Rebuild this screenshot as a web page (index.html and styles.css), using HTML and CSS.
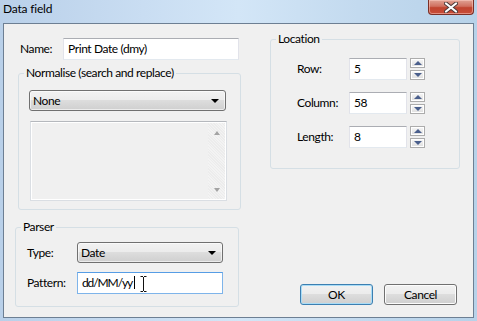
FILE: index.html
```html
<!DOCTYPE html>
<html lang="en">
<head>
    <meta charset="UTF-8">
    <title>Data field</title>
    <link rel="stylesheet" href="styles.css">
</head>
<body>
    <div class="window">
        <div class="titlebar">
            <span class="title">Data field</span>
            <div class="close-btn">
                <svg width="14" height="11" viewBox="0 0 14 11">
                    <path d="M2 1.5 L12 9.5 M12 1.5 L2 9.5" stroke="#4a3838" stroke-width="4" stroke-linecap="round"/>
                    <path d="M2 1.5 L12 9.5 M12 1.5 L2 9.5" stroke="#fff" stroke-width="2.2" stroke-linecap="round"/>
                </svg>
            </div>
        </div>

        <div class="client">
            <div class="col-left">
                <div class="name-row">
                    <span class="label name-label">Name:</span>
                    <div class="textbox name-box">Print Date (dmy)</div>
                </div>

                <fieldset class="group normalise">
                    <legend>Normalise (search and replace)</legend>
                    <div class="group-body">
                        <div class="combo normalise-combo">None<span class="combo-arrow"></span></div>
                        <div class="listbox">
                            <div class="list-items"></div>
                            <div class="scrollbar">
                                <span class="sb-arrow up"></span>
                                <span class="sb-arrow down"></span>
                            </div>
                        </div>
                    </div>
                </fieldset>

                <fieldset class="group parser">
                    <legend>Parser</legend>
                    <div class="group-body">
                        <div class="field-row">
                            <span class="label parser-label">Type:</span>
                            <div class="combo parser-input">Date<span class="combo-arrow"></span></div>
                        </div>
                        <div class="field-row pattern-row">
                            <span class="label parser-label">Pattern:</span>
                            <div class="textbox parser-input focused"><span class="pattern-text">dd/MM/yy</span><span class="caret"></span>
                                <svg class="ibeam" width="7" height="16" viewBox="0 0 7 16">
                                    <path d="M0.5 0.5 H3 M4 0.5 H6.5 M3.5 1 V15 M0.5 15.5 H3 M4 15.5 H6.5" stroke="#111" stroke-width="1" fill="none"/>
                                </svg>
                            </div>
                        </div>
                    </div>
                </fieldset>
            </div>

            <div class="col-right">
                <fieldset class="group location">
                    <legend>Location</legend>
                    <div class="group-body">
                        <div class="spin-row">
                            <span class="label loc-label">Row:</span>
                            <div class="textbox loc-box">5</div>
                            <div class="spinner"><span class="spin up"></span><span class="spin down"></span></div>
                        </div>
                        <div class="spin-row">
                            <span class="label loc-label">Column:</span>
                            <div class="textbox loc-box">58</div>
                            <div class="spinner"><span class="spin up"></span><span class="spin down"></span></div>
                        </div>
                        <div class="spin-row">
                            <span class="label loc-label">Length:</span>
                            <div class="textbox loc-box">8</div>
                            <div class="spinner"><span class="spin up"></span><span class="spin down"></span></div>
                        </div>
                    </div>
                </fieldset>

                <div class="buttons">
                    <div class="button default">OK</div>
                    <div class="button">Cancel</div>
                </div>
            </div>
        </div>
    </div>
</body>
</html>
```

FILE: styles.css
```css
* {
    box-sizing: border-box;
}

body {
    margin: 0;
    font-family: Lato, "Liberation Sans", sans-serif;
    font-size: 12px;
    letter-spacing: -0.4px;
    color: #000;
    background: #fff;
}

.window {
    width: 477px;
    height: 321px;
    display: flex;
    flex-direction: column;
    background: linear-gradient(to right, #b9d0e9 0%, #c9ddf2 30%, #d3e6f7 50%, #c3daef 75%, #b7d2e9 100%);
}

/* title bar */
.titlebar {
    height: 23px;
    display: flex;
    justify-content: space-between;
    align-items: flex-start;
}

.title {
    padding: 2px 0 0 3px;
    line-height: 14px;
    letter-spacing: -0.2px;
}

.close-btn {
    width: 46px;
    height: 15px;
    margin-right: 3px;
    display: flex;
    align-items: center;
    justify-content: center;
    border: 1px solid #7b2f26;
    border-top: none;
    border-radius: 0 0 4px 4px;
    background: linear-gradient(#e0a294 0%, #d0705f 45%, #c0442f 55%, #c84c38 100%);
    box-shadow: inset 0 0 0 1px rgba(255, 210, 200, 0.5);
}

/* client area */
.client {
    height: 295px;
    margin: 0 3px;
    border: 1px solid #6d7f93;
    background: #f0f0f0;
    display: grid;
    grid-template-columns: 237px 1fr;
}

.col-left {
    display: flex;
    flex-direction: column;
}

.col-right {
    display: flex;
    flex-direction: column;
}

.label {
    line-height: 14px;
}

/* controls */
.textbox {
    height: 22px;
    padding: 0 4px;
    line-height: 20px;
    background: #fff;
    border: 1px solid #e2e3ea;
    border-top-color: #abadb3;
    border-bottom-color: #e3e9ef;
}

.textbox.focused {
    position: relative;
    border-color: #7eb4ea;
    border-top-color: #569de5;
}

.pattern-text {
    letter-spacing: -1.1px;
}

.caret {
    display: inline-block;
    width: 1px;
    height: 13px;
    margin-left: 2px;
    background: #000;
    vertical-align: -2px;
}

.ibeam {
    position: absolute;
    left: 62px;
    top: 3px;
}

.combo {
    height: 21px;
    padding: 0 3px;
    line-height: 19px;
    position: relative;
    border: 1px solid #707070;
    border-radius: 3px;
    background: linear-gradient(#f2f2f2 0%, #ebebeb 50%, #dddddd 50%, #cfcfcf 100%);
    box-shadow: inset 0 0 0 1px rgba(255, 255, 255, 0.6);
}

.combo-arrow {
    position: absolute;
    right: 6px;
    top: 8px;
    border-left: 4px solid transparent;
    border-right: 4px solid transparent;
    border-top: 4px solid #000;
}

/* group boxes */
.group {
    margin: 0;
    padding: 0;
    min-width: 0;
    border: 1px solid #d5dfe5;
    border-radius: 3px;
}

.group legend {
    margin-left: 5px;
    padding: 0 2px;
    line-height: 14px;
}

.name-row {
    display: flex;
    align-items: center;
    margin: 14px 0 0 16px;
}

.name-label {
    width: 43px;
}

.name-box {
    width: 176px;
}

.normalise {
    width: 223px;
    margin: 6px 0 0 14px;
}

.normalise .group-body {
    padding: 10px 0 8px 10px;
}

.normalise-combo {
    width: 197px;
}

.listbox {
    width: 197px;
    height: 80px;
    margin: 10px 0 0 1px;
    display: flex;
    border: 1px solid #dadee3;
    border-top-color: #b5b8bd;
    box-shadow: inset 0 0 0 1px #fff;
}

.list-items {
    flex: 1;
}

.scrollbar {
    width: 17px;
    margin: 1px 1px 1px 0;
    display: flex;
    flex-direction: column;
    justify-content: space-between;
    align-items: center;
    padding: 8px 0 7px;
    background: repeating-linear-gradient(45deg, #f3f3f3 0 1px, #ececec 1px 2px);
}

.sb-arrow {
    border-left: 3.5px solid transparent;
    border-right: 3.5px solid transparent;
}

.sb-arrow.up {
    border-bottom: 4px solid #a3a3a3;
}

.sb-arrow.down {
    border-top: 4px solid #a3a3a3;
}

.parser {
    width: 224px;
    margin: 10px 0 0 11px;
}

.parser .group-body {
    padding: 8px 0 12px 11px;
}

.field-row {
    display: flex;
    align-items: center;
}

.pattern-row {
    margin-top: 9px;
}

.parser-label {
    width: 50px;
}

.parser-input {
    width: 146px;
}

/* location */
.location {
    width: 190px;
    margin: 8px 0 0 29px;
}

.location .group-body {
    padding: 12px 0 20px 26px;
}

.spin-row {
    display: flex;
    align-items: center;
}

.spin-row + .spin-row {
    margin-top: 12px;
}

.loc-label {
    width: 52px;
}

.loc-box {
    width: 58px;
}

.spinner {
    height: 22px;
    margin-left: 3px;
    display: flex;
    flex-direction: column;
    gap: 2px;
}

.spin {
    width: 15px;
    height: 10px;
    display: flex;
    align-items: center;
    justify-content: center;
    border: 1px solid #acacac;
    background: linear-gradient(#f7f7f7, #dedede);
    box-shadow: inset 0 0 0 1px #fff;
}

.spin::after {
    content: "";
    border-left: 4px solid transparent;
    border-right: 4px solid transparent;
}

.spin.up::after {
    border-bottom: 4px solid #4a5f8c;
}

.spin.down::after {
    border-top: 4px solid #4a5f8c;
}

/* buttons */
.buttons {
    margin: auto 16px 12px 0;
    display: flex;
    justify-content: flex-end;
    gap: 11px;
}

.button {
    width: 73px;
    height: 21px;
    line-height: 19px;
    text-align: center;
    border: 1px solid #707070;
    border-radius: 3px;
    background: linear-gradient(#f2f2f2 0%, #ebebeb 50%, #dddddd 50%, #cfcfcf 100%);
    box-shadow: inset 0 0 0 1px #fcfcfc;
}

.button.default {
    border-color: #3c7fb1;
    box-shadow: inset 0 0 0 1px #a9dcf6;
}
```
